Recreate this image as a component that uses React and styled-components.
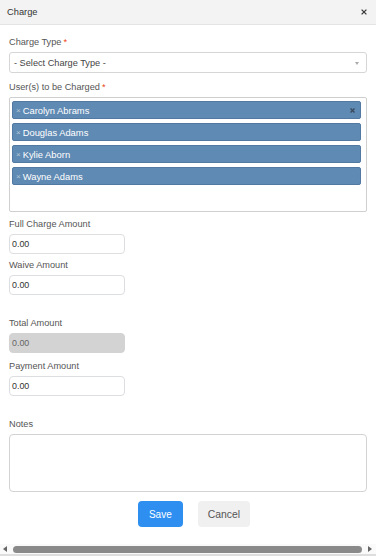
import styled, { createGlobalStyle } from "styled-components";

const users = ["Carolyn Abrams", "Douglas Adams", "Kylie Aborn", "Wayne Adams"];

const GlobalStyle = createGlobalStyle`
  html, body {
    margin: 0;
    padding: 0;
    background: #fff;
  }
  body {
    font-family: "Liberation Sans", Arial, sans-serif;
  }
  * {
    box-sizing: border-box;
  }
`;

export default function App() {
  return (
    <>
      <GlobalStyle />
      <Page>
        <Header>
          <Title>Charge</Title>
          <CloseIcon viewBox="0 0 6 6">
            <path d="M0.6 0.6 L5.4 5.4 M5.4 0.6 L0.6 5.4" />
          </CloseIcon>
        </Header>

        <Body>
          <Field>
            <Label>
              Charge Type<Star>*</Star>
            </Label>
            <Select>
              - Select Charge Type -
              <Caret />
            </Select>
          </Field>

          <Field $top={8}>
            <Label $mb={4}>
              User(s) to be Charged<Star>*</Star>
            </Label>
            <MultiBox>
              {users.map((name, i) => (
                <Chip key={name}>
                  <ChipX>×</ChipX>
                  <ChipText>{name}</ChipText>
                  {i === 0 ? (
                    <ClearIcon viewBox="0 0 5 5">
                      <path d="M0.5 0.5 L4.5 4.5 M4.5 0.5 L0.5 4.5" />
                    </ClearIcon>
                  ) : null}
                </Chip>
              ))}
            </MultiBox>
          </Field>

          <Field $top={6}>
            <Label>Full Charge Amount</Label>
            <Amount>0.00</Amount>
          </Field>

          <Field $top={5}>
            <Label>Waive Amount</Label>
            <Amount>0.00</Amount>
          </Field>

          <Field $top={22}>
            <Label>Total Amount</Label>
            <Amount $disabled>0.00</Amount>
          </Field>

          <Field $top={7}>
            <Label>Payment Amount</Label>
            <Amount>0.00</Amount>
          </Field>

          <Field $top={22}>
            <Label>Notes</Label>
            <Notes />
          </Field>

          <ButtonRow>
            <Button $primary>Save</Button>
            <Button>Cancel</Button>
          </ButtonRow>
        </Body>

        <ScrollBar>
          <Arrow $dir="left" />
          <Thumb />
          <Arrow $dir="right" />
        </ScrollBar>
        <BottomLine />
      </Page>
    </>
  );
}

const Page = styled.div`
  display: flex;
  flex-direction: column;
  height: 100vh;
  overflow: hidden;
`;

const Header = styled.div`
  height: 25px;
  flex-shrink: 0;
  display: flex;
  align-items: center;
  justify-content: space-between;
  padding: 0 9px 0 7px;
  background: #f3f3f3;
  border-bottom: 1px solid #e4e4e4;
`;

const Title = styled.div`
  font-size: 9.3px;
  color: #333;
`;

const CloseIcon = styled.svg`
  width: 6px;
  height: 6px;
  stroke: #3a3a3a;
  stroke-width: 1.3;
  fill: none;
`;

const Body = styled.div`
  padding: 11px 9px 0 9px;
`;

const Field = styled.div`
  margin-top: ${(p) => p.$top || 0}px;
`;

const Label = styled.div`
  font-size: 9.2px;
  line-height: 12px;
  color: #555;
  margin-bottom: ${(p) => p.$mb ?? 4}px;
`;

const Star = styled.span`
  color: #ed3f14;
  margin-left: 2px;
`;

const Select = styled.div`
  position: relative;
  height: 21px;
  border: 1px solid #d6d6d6;
  border-radius: 3px;
  padding-left: 4px;
  display: flex;
  align-items: center;
  font-size: 9.2px;
  color: #444;
`;

const Caret = styled.span`
  position: absolute;
  right: 7px;
  top: 9px;
  border-left: 2.5px solid transparent;
  border-right: 2.5px solid transparent;
  border-top: 3px solid #aaa;
`;

const MultiBox = styled.div`
  height: 115px;
  border: 1px solid #cfcfcf;
  border-radius: 2px;
  padding: 3px 5px 0 2px;
  display: flex;
  flex-direction: column;
  gap: 4px;
`;

const Chip = styled.div`
  height: 18px;
  display: flex;
  align-items: center;
  padding: 0 4px 0 3px;
  background: #5f8ab3;
  border: 1px solid #5279a1;
  border-radius: 2px;
  color: #fff;
  font-size: 9.4px;
`;

const ChipX = styled.span`
  color: #b9c7d6;
  font-size: 8px;
  margin-right: 2px;
`;

const ChipText = styled.span`
  flex: 1;
`;

const ClearIcon = styled.svg`
  width: 5px;
  height: 5px;
  stroke: #3c4d60;
  stroke-width: 1.5;
  fill: none;
  margin-right: 1px;
`;

const Amount = styled.div`
  width: 116px;
  height: 20px;
  display: flex;
  align-items: center;
  padding-left: 2px;
  border: 1px solid ${(p) => (p.$disabled ? "#d3d3d3" : "#dcdee2")};
  border-radius: 4px;
  background: ${(p) => (p.$disabled ? "#d3d3d3" : "#fff")};
  font-size: 8.9px;
  color: ${(p) => (p.$disabled ? "#666" : "#333")};
`;

const Notes = styled.div`
  height: 58px;
  border: 1px solid #d3d3d3;
  border-radius: 4px;
`;

const ButtonRow = styled.div`
  display: flex;
  justify-content: center;
  gap: 15px;
  margin-top: 9px;
  padding-left: 12px;
`;

const Button = styled.div`
  height: 26px;
  padding: 0 ${(p) => (p.$primary ? 11 : 10)}px;
  display: flex;
  align-items: center;
  border-radius: 4px;
  background: ${(p) => (p.$primary ? "#2e8ff1" : "#f0f0f0")};
  color: ${(p) => (p.$primary ? "#fff" : "#555")};
  font-size: ${(p) => (p.$primary ? 10 : 10.4)}px;
`;

const ScrollBar = styled.div`
  margin-top: auto;
  height: 10px;
  display: flex;
  align-items: center;
  gap: 6px;
  padding: 0 4px 0 3px;
  background: #fafafa;
`;

const Arrow = styled.span`
  border-top: 3px solid transparent;
  border-bottom: 3px solid transparent;
  ${(p) =>
    p.$dir === "left"
      ? "border-right: 4px solid #666;"
      : "border-left: 4px solid #666;"}
`;

const Thumb = styled.div`
  flex: 1;
  height: 7px;
  border-radius: 4px;
  background: #8a8a8a;
`;

const BottomLine = styled.div`
  height: 2px;
  background: #dedede;
`;
